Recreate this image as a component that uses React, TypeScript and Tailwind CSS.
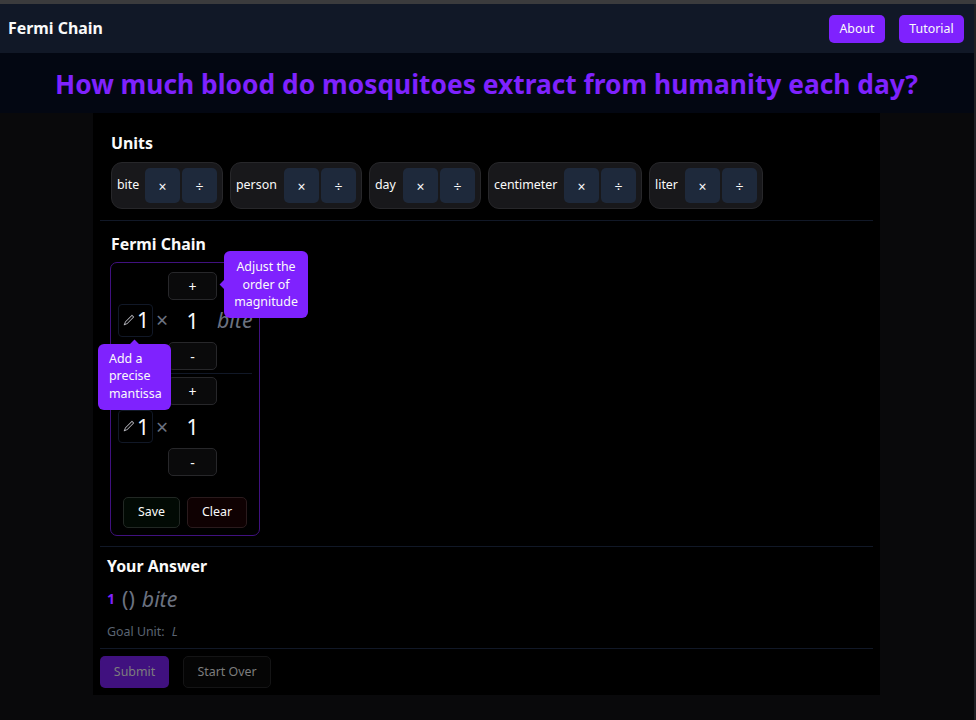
import React from "react";
import { RxPencil1 } from "react-icons/rx";

const units = [
  { name: "bite", width: "w-[112px]" },
  { name: "person", width: "w-[132px]" },
  { name: "day", width: "w-[112px]" },
  { name: "centimeter", width: "w-[154px]" },
  { name: "liter", width: "w-[114px]" },
];

function UnitCard({ name, width }: { name: string; width: string }) {
  return (
    <div className={`flex h-[47px] ${width} shrink-0 items-center rounded-[11px] border border-[#27272a] bg-[#18181b] pl-[5px] pr-[5px]`}>
      <span className="mr-auto">{name}</span>
      <button className="mr-[2px] size-[35px] rounded-[5px] bg-[#1e293b] pt-px text-[14px]">×</button>
      <button className="size-[35px] rounded-[5px] bg-[#1e293b] pt-px text-[14px]">÷</button>
    </div>
  );
}

function StepButton({ children }: { children: React.ReactNode }) {
  return (
    <button className="flex h-[28px] w-[49px] items-center justify-center rounded-[5px] border border-[#27272a] bg-[#0a0a0b] text-[14px]">
      {children}
    </button>
  );
}

function Factor({ unit, tips }: { unit?: string; tips?: boolean }) {
  return (
    <div className={`flex shrink-0 items-center ${tips ? "h-[98px]" : "h-[99px]"}`}>
      <div className={`relative flex h-[33px] w-[35px] shrink-0 items-center justify-center gap-[2px] rounded-[4px] border border-[#111827] ${tips ? "-mt-[2px]" : ""}`}>
        <RxPencil1 className="size-[13px] text-[#b4b4bb]" />
        <span className="text-[21.3px]">1</span>
        {tips && (
          <div className="absolute left-[-21px] top-[39px] z-10 h-[66px] w-[73px] rounded-[6px] bg-[#7f22fe] pl-[11px] pt-[6px] text-left leading-[17.7px]">
            <div className="absolute left-[33px] top-[-3px] size-[7px] rotate-45 bg-[#7f22fe]" />
            Add a precise mantissa
          </div>
        )}
      </div>
      <span className={`w-[15px] shrink-0 pl-[3px] text-[21.3px] text-[#6b7280] ${tips ? "-mt-[2px]" : ""}`}>×</span>
      <div className="relative flex h-full w-[49px] shrink-0 flex-col items-center justify-between">
        <StepButton>+</StepButton>
        <span className="text-[21.3px] leading-[28px]">1</span>
        <StepButton>-</StepButton>
        {tips && (
          <div className="absolute left-[56px] top-[-21px] z-10 h-[67px] w-[84px] rounded-[6px] bg-[#7f22fe] px-2 pt-[7px] text-center leading-[17.7px]">
            <div className="absolute left-[-3px] top-[30px] size-[7px] rotate-45 bg-[#7f22fe]" />
            Adjust the order of magnitude
          </div>
        )}
      </div>
      {unit && <span className="-mt-[2px] shrink-0 text-[21.3px] italic text-[#6b7280]">{unit}</span>}
    </div>
  );
}

export default function App() {
  return (
    <div className="relative h-[720px] w-[976px] overflow-hidden bg-[#09090b] font-['Noto_Sans',sans-serif] text-[12.4px] text-[#fafafa]">
      <div className="h-1 bg-[#3b3b3d]" />
      <header className="flex h-[49px] items-center bg-[#111827] pl-[8px] pr-3">
        <div className="mr-auto pt-px text-[15.9px] font-bold">Fermi Chain</div>
        <button className="mr-[14px] h-7 w-14 rounded-[5px] bg-[#7f22fe] pt-px">About</button>
        <button className="h-7 w-[65px] rounded-[5px] bg-[#7f22fe] pt-px">Tutorial</button>
      </header>
      <div className="flex h-[60px] items-center justify-center bg-[#030712] pr-[3px] pt-[3px]">
        <h1 className="whitespace-nowrap text-[26.36px] font-bold text-[#7f22fe]">
          How much blood do mosquitoes extract from humanity each day?
        </h1>
      </div>
      <main className="ml-[93px] h-[582px] w-[787px] bg-black px-[7px]">
        <section className="h-[107px] pl-[11px] pt-[19px]">
          <h2 className="h-[30px] text-[15.9px] font-bold leading-[22px]">Units</h2>
          <div className="flex gap-[7px]">
            {units.map((u) => (
              <UnitCard key={u.name} name={u.name} width={u.width} />
            ))}
          </div>
        </section>
        <section className="h-[326px] border-t border-[#111827] pl-[10px] pt-3">
          <h2 className="h-[29px] pl-px text-[15.9px] font-bold leading-[22px]">Fermi Chain</h2>
          <div className="flex h-[274px] w-[150px] flex-col rounded-[7px] border border-[#40117f] px-[7px] pt-[9px]">
            <Factor unit="bite" tips />
            <div className="mb-[3px] mt-[3px] h-px shrink-0 bg-[#111827]" />
            <Factor />
            <div className="mt-[21px] flex gap-[7px] pl-[5px]">
              <button className="h-[31px] w-[57px] rounded-[5px] border border-[#222824] bg-[#020a04]">Save</button>
              <button className="h-[31px] w-[60px] rounded-[5px] border border-[#2a1b1d] bg-[#0f0102]">Clear</button>
            </div>
          </div>
        </section>
        <section className="h-[102px] border-t border-[#111827] pl-[7px] pt-[8px]">
          <h2 className="text-[15.9px] font-bold leading-[22px]">Your Answer</h2>
          <div className="mt-[6px] flex h-[32px] items-center gap-[7px] text-[21.3px] text-[#6b7280]">
            <span className="-mt-[2px] text-[14px] font-bold text-[#7f22fe]">1</span>
            <span>()</span>
            <span className="italic">bite</span>
          </div>
          <p className="mt-[8px] leading-[18px] text-[#5b6472]">
            Goal Unit: <span className="ml-1 italic">L</span>
          </p>
        </section>
        <div className="flex gap-[14px] border-t border-[#111827] pt-[7px]">
          <button className="h-8 w-[69px] rounded-[5px] bg-[#40117f] text-[#7d7d7d]">Submit</button>
          <button className="h-8 w-[88px] rounded-[5px] border border-[#141415] bg-[#050505] text-[#7d7d7d]">Start Over</button>
        </div>
      </main>
      <div className="absolute bottom-0 right-0 top-1 w-[2px] bg-[#202024]" />
    </div>
  );
}
